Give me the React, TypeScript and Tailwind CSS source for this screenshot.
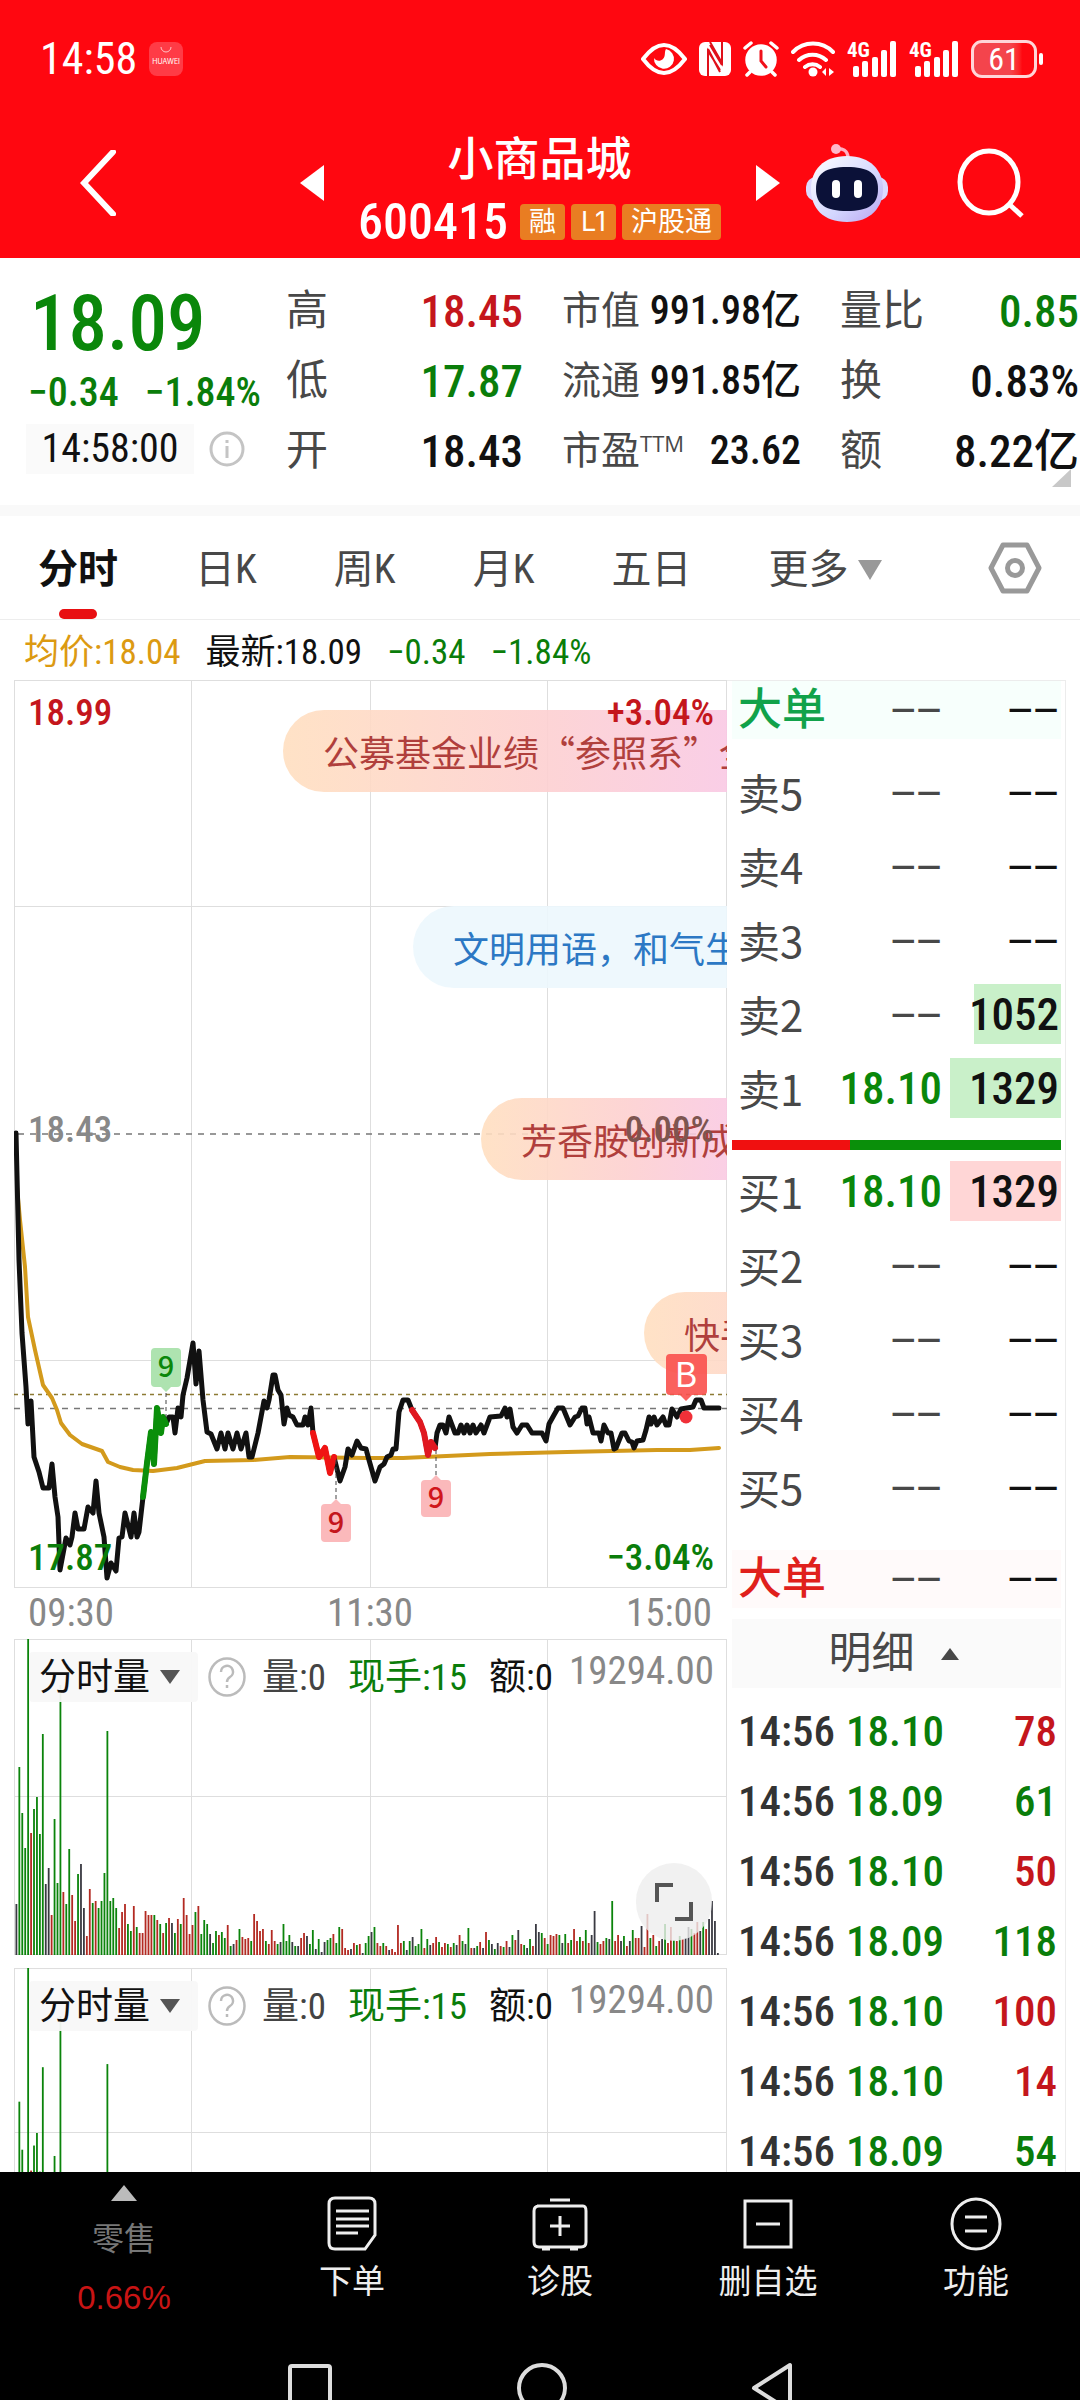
import React from 'react';

const UP = 'text-[#c4161c]';
const DOWN = 'text-[#0a7d0a]';

const tabs = ['分时', '日K', '周K', '月K', '五日'];

const asks = [
  { label: '卖5', price: '', volume: '', bar: 0 },
  { label: '卖4', price: '', volume: '', bar: 0 },
  { label: '卖3', price: '', volume: '', bar: 0 },
  { label: '卖2', price: '', volume: '1052', bar: 87 },
  { label: '卖1', price: '18.10', volume: '1329', bar: 111 }
];

const bids = [
  { label: '买1', price: '18.10', volume: '1329', bar: 111 },
  { label: '买2', price: '', volume: '', bar: 0 },
  { label: '买3', price: '', volume: '', bar: 0 },
  { label: '买4', price: '', volume: '', bar: 0 },
  { label: '买5', price: '', volume: '', bar: 0 }
];

const ticks = [
  { time: '14:56', price: '18.10', volume: '78', up: true },
  { time: '14:56', price: '18.09', volume: '61', up: false },
  { time: '14:56', price: '18.10', volume: '50', up: true },
  { time: '14:56', price: '18.09', volume: '118', up: false },
  { time: '14:56', price: '18.10', volume: '100', up: true },
  { time: '14:56', price: '18.10', volume: '14', up: true },
  { time: '14:56', price: '18.09', volume: '54', up: false }
];

const priceLine =
  '2,453 5,580 8,653 12,707 14,744 17,721 20,777 25,792 29,808 35,808 38,784 41,817 44,837 46,890 52,858 56,865 58,857 61,833 64,849 70,849 74,827 79,833 82,801 85,833 90,857 93,898 97,883 102,891 105,858 108,857 111,833 117,857 120,833 123,857 125,852 129,817 133,783 137,752 140,784 143,728 147,753 149,737 152,744 155,737 159,737 161,753 164,728 167,737 169,715 173,698 179,663 182,704 185,671 189,720 193,752 197,754 203,769 207,753 211,769 214,753 219,769 223,753 227,769 232,753 235,777 238,777 244,753 250,721 253,728 255,720 259,695 261,695 264,710 267,715 270,744 273,728 275,735 279,737 283,745 289,745 291,737 294,745 297,728 299,753 305,777 311,768 316,793 320,777 326,801 331,787 334,769 338,775 343,761 347,768 352,769 355,780 361,801 366,787 370,784 373,777 377,775 379,769 382,769 385,732 389,720 394,720 398,730 406,742 410,753 414,775 417,762 421,768 423,753 426,745 429,745 432,753 435,737 441,753 444,753 447,745 450,753 453,745 456,753 459,745 462,753 467,745 470,753 476,737 487,736 491,728 493,737 496,729 499,747 503,753 508,745 513,745 518,753 528,753 532,761 535,744 540,735 544,728 549,728 556,745 561,737 564,736 568,728 571,728 573,744 575,737 579,753 585,753 587,761 590,745 594,753 597,753 600,769 602,768 608,753 611,753 615,761 618,762 620,768 623,761 629,760 632,750 635,737 637,744 640,737 643,745 649,737 652,745 655,745 658,729 663,737 667,729 679,727 682,720 687,720 690,728 705,728';

const averageLine =
  '3,507 6,540 11,587 14,637 21,670 29,705 38,718 43,730 47,743 56,755 68,764 88,771 94,782 106,787 119,790 139,791 163,788 191,781 239,780 276,777 353,778 389,778 476,774 553,772 643,770 676,770 705,768';

// one entry per minute: height followed by g (down), r (up) or k (flat)
const volumes =
  '51k 188g 142g 107g 316g 122r 146g 158g 121g 221g 71k 87k 40r 136g 72g 270g 63r 51g 106g 60r 34r 81g 91k 47k 19r 66r 52g 54r 47g 54g 82g 224g 54g 57g 47g 27r 43r 51r 31g 24g 49r 28g 22r 22r 44r 40r 40r 40g 35r 31g 22r 32g 37r 32k 22g 36r 31g 57r 40r 21r 30r 43g 49r 21g 35g 31g 21k 12g 24g 20r 23g 17g 30r 9g 11k 15r 26g 18r 16r 17r 14g 41r 34r 24r 26r 14g 11r 25r 14r 11g 13k 31g 14g 20g 13k 9g 9k 17r 22r 19k 11g 25g 6k 16g 3k 13k 15g 17g 21r 12g 28g 26r 7r 5r 6k 12r 10g 11r 2k 12g 19g 23k 28g 12r 9r 12g 9r 5k 6r 3r 30r 12r 14g 5k 14g 18k 9g 11g 26g 7r 16g 10k 12r 18r 13g 8r 12r 11g 8r 12g 10k 20r 14g 11k 27g 7r 7k 9g 13r 7k 23r 15g 11k 6g 12k 9r 8g 14r 8k 20g 15r 25k 11r 10g 7k 16g 9r 31k 23k 22g 17r 11g 20r 19r 21r 20g 12k 21g 12r 15g 26r 14r 18g 14r 25g 12r 20k 44k 13g 11r 14r 17g 16k 54g 14r 20r 14k 19g 9r 14k 25g 17r 17r 29k 8r 41r 17g 20r 9g 14r 16k 31g 12r 28r 15g 14r 19g 16r 17k 28k 26g 22r 33r 24k 33g 26r 36k 54k 34k 2k'.split(
    ' '
  );

const barColor: Record<string, string> = { g: '#0b840b', r: '#b32a22', k: '#3a3a42' };

const Dashes = () => <span className="font-['Liberation_Sans'] text-[44px]">−−</span>;

const Triangle = ({ d, className }: { d: string; className: string }) => (
  <svg viewBox="0 0 24 36" preserveAspectRatio="none" className={className} aria-hidden="true">
    <path d={d} fill="currentColor" />
  </svg>
);

const Signal = () => (
  <svg viewBox="0 0 50 36" className="h-9 w-[50px]" fill="#fff" aria-hidden="true">
    <text x="0" y="16" fontSize="21" fontWeight="bold" fontFamily="Roboto Condensed, sans-serif">
      4G
    </text>
    <rect x="6" y="25" width="6" height="11" rx="2" />
    <rect x="15" y="20" width="6" height="16" rx="2" />
    <rect x="25" y="16" width="6" height="20" rx="2" />
    <rect x="34" y="9" width="6" height="27" rx="2" />
    <rect x="43" y="0" width="6" height="36" rx="2" />
  </svg>
);

const StatusBar = () => (
  <div className="flex h-[116px] items-center justify-between pt-[2px] pr-[37px] pl-10">
    <div className="flex items-center gap-3">
      <span className="text-[44px] leading-none">14:58</span>
      <span className="flex h-[34px] w-[34px] flex-col items-center rounded-lg bg-[#ff3b46] font-['Inter'] text-[7px] leading-none">
        <svg viewBox="0 0 12 8" className="mt-1 h-2 w-3" fill="none" stroke="#ffc5c8" aria-hidden="true">
          <path d="M1 1a5 5 0 0 0 10 0" />
        </svg>
        <span className="mt-1">HUAWEI</span>
      </span>
    </div>
    <div className="flex items-center gap-3">
      <svg viewBox="0 0 46 34" className="h-[34px] w-[46px]" aria-hidden="true">
        <path d="M2 17Q23-11 44 17Q23 45 2 17Z" fill="none" stroke="#fff" strokeWidth="4" strokeLinejoin="round" />
        <path d="M25 7a10 10 0 1 1-12 9c2 3 6 4 9 1c3-3 1-7 3-10Z" fill="#fff" />
      </svg>
      <svg viewBox="0 0 32 34" className="h-[34px] w-8" aria-hidden="true">
        <rect width="32" height="34" rx="6" fill="#fff" />
        <path d="M9 34V9l12 19M11 0l12 21V0M11 3l12 20M9 7l12 23" fill="none" stroke="#e0101a" strokeWidth="2" />
      </svg>
      <svg viewBox="0 0 36 36" className="h-9 w-9" fill="none" stroke="#fff" strokeWidth="3.500" strokeLinecap="round" aria-hidden="true">
        <circle cx="18" cy="19" r="14" fill="#fff" />
        <path d="M2 7l6-5M34 7l-6-5M7 31l-3 3M29 31l3 3" />
        <path d="M18 10v10l5 6" stroke="#f0101a" strokeWidth="3" />
      </svg>
      <svg viewBox="0 0 44 36" className="h-9 w-11" fill="none" stroke="#fff" strokeWidth="4" strokeLinecap="round" aria-hidden="true">
        <path d="M2 11a28 28 0 0 1 40 0M8 19a20 20 0 0 1 27 0M14 26a12 12 0 0 1 15 0" />
        <circle cx="22" cy="31" r="4.500" fill="#fff" stroke="none" />
        <path d="M35 27v8l-4-4ZM38 27v8l5-4Z" fill="#fff" stroke="none" />
      </svg>
      <Signal />
      <Signal />
      <span className="flex items-center gap-[2px]">
        <span className="flex h-[38px] w-[66px] items-center justify-center rounded-[11px] border-[3px] border-[#ffd5d8] bg-linear-to-r from-[#f4444c] from-60% to-[#ff0710] to-80% text-[32px] leading-none">
          61
        </span>
        <span className="h-3 w-1 rounded-sm bg-white" />
      </span>
    </div>
  </div>
);

const Robot = () => (
  <svg viewBox="0 0 82 78" className="h-[78px] w-[82px]" aria-hidden="true">
    <defs>
      <linearGradient id="shell" x1="0" y1="0" x2="1" y2="1">
        <stop offset="0" stopColor="#fff" />
        <stop offset="0.600" stopColor="#d3d6ff" />
        <stop offset="1" stopColor="#b9a4ee" />
      </linearGradient>
    </defs>
    <path d="M42 14C42 6 36 4 30 5" fill="none" stroke="#ffb0c4" strokeWidth="3.500" />
    <circle cx="30" cy="5" r="5" fill="#ffb8ca" />
    <rect x="0" y="33" width="82" height="24" rx="10" fill="#dcd9ff" />
    <path d="M41 12C65 12 77 27 77 45S65 78 41 78S5 64 5 45S17 12 41 12Z" fill="url(#shell)" />
    <path d="M41 23C62 23 72 29 72 45S62 67 41 67S10 61 10 45S20 23 41 23Z" fill="#0b1138" />
    <rect x="26" y="36" width="8" height="18" rx="4" fill="#fff" />
    <rect x="48" y="36" width="8" height="18" rx="4" fill="#fff" />
  </svg>
);

const Header = () => (
  <header className="bg-[#ff0710] text-white">
    <StatusBar />
    <div className="flex h-[142px] items-center pb-2">
      <div className="flex flex-1 pl-20">
        <button aria-label="返回">
          <svg viewBox="0 0 36 66" className="h-[66px] w-9" fill="none" stroke="#fff" strokeWidth="6" aria-hidden="true">
            <path d="M33 2L4 33L33 64" strokeLinecap="round" />
          </svg>
        </button>
      </div>
      <div className="flex w-[480px] items-center justify-between">
        <button aria-label="上一只">
          <Triangle d="M24 0v36L0 18Z" className="h-9 w-6" />
        </button>
        <div className="flex flex-col items-center pt-4">
          <h1 className="text-[46px] leading-[62px] font-medium">小商品城</h1>
          <div className="flex h-16 items-center gap-[6px] text-[27px]">
            <span className="mr-[6px] text-[50px] leading-none font-medium">600415</span>
            <span className="rounded-sm bg-[#e97d22] px-[9px] leading-9">融</span>
            <span className="rounded-sm bg-[#e97d22] px-[10px] font-['Inter'] leading-9">L1</span>
            <span className="rounded-sm bg-[#e97d22] px-[9px] leading-9">沪股通</span>
          </div>
        </div>
        <button aria-label="下一只">
          <Triangle d="M0 0v36L24 18Z" className="h-9 w-6" />
        </button>
      </div>
      <div className="flex flex-1 items-center justify-between pr-[55px] pl-[26px]">
        <button aria-label="智能助手">
          <Robot />
        </button>
        <button aria-label="搜索">
          <svg viewBox="0 0 68 70" className="h-[70px] w-[68px]" fill="none" stroke="#fff" strokeWidth="5" aria-hidden="true">
            <ellipse cx="32" cy="34" rx="29" ry="31" />
            <path d="M53 57l12 11" />
          </svg>
        </button>
      </div>
    </div>
  </header>
);

const Stat = ({ label, value, tone = 'text-[#111]', small = false }: { label: React.ReactNode; value: string; tone?: string; small?: boolean }) => (
  <div className="flex h-[70px] items-center justify-between whitespace-nowrap">
    <dt className={small ? 'text-[39px] text-[#484848]' : 'text-[42px] text-[#484848]'}>{label}</dt>
    <dd className={`font-medium ${tone} ${small ? 'text-[40px]' : 'text-[45px]'}`}>{value}</dd>
  </div>
);

const Quote = () => (
  <section className="relative grid grid-cols-[minmax(0,1fr)_237px_239px_239px] gap-x-[39px] pt-[18px] pr-px pb-[19px] leading-none">
    <div className="whitespace-nowrap">
      <div className="flex h-[92px] items-center pt-1 pl-[30px] text-[77px] font-medium text-[#0a870a]">18.09</div>
      <div className={`flex h-[50px] items-center gap-[26px] pl-7 text-[40px] font-medium ${DOWN}`}>
        <span>−0.34</span>
        <span>−1.84%</span>
      </div>
      <div className="mt-[6px] flex items-center gap-[15px] pl-[26px]">
        <span className="flex h-[50px] w-[168px] items-center justify-center bg-[#fafafa] text-[40px] text-[#111]">14:58:00</span>
        <button aria-label="说明">
          <svg viewBox="0 0 36 36" className="h-9 w-9" fill="none" stroke="#c4c4c4" strokeWidth="3" aria-hidden="true">
            <circle cx="18" cy="18" r="16" />
            <path d="M18 15v12M18 9v3" />
          </svg>
        </button>
      </div>
    </div>
    <dl>
      <Stat label="高" value="18.45" tone={UP} />
      <Stat label="低" value="17.87" tone={DOWN} />
      <Stat label="开" value="18.43" />
    </dl>
    <dl>
      <Stat label="市值" value="991.98亿" small />
      <Stat label="流通" value="991.85亿" small />
      <Stat
        label={
          <span className="flex">
            市盈<span className="font-['Open_Sans'] text-[22px]">TTM</span>
          </span>
        }
        value="23.62"
        small
      />
    </dl>
    <dl>
      <Stat label="量比" value="0.85" tone={DOWN} />
      <Stat label="换" value="0.83%" />
      <Stat label="额" value="8.22亿" />
    </dl>
    <Triangle d="M24 0v36H0Z" className="absolute right-[9px] bottom-[18px] h-[18px] w-[19px] text-[#c8c8c8]" />
  </section>
);

const Tabs = () => (
  <nav className="box-content flex h-[103px] items-center border-t-[11px] border-b border-[#ededed] border-t-[#f9f9f9] pl-[38px] text-[40px] text-[#484848]">
    <div className="flex h-full items-stretch gap-[77px]">
      {tabs.map((tab, index) => (
        <button key={tab} className={index === 0 ? 'relative pt-1 font-bold text-[#111]' : 'pt-1'}>
          {tab}
          {index === 0 && <span className="absolute bottom-0 left-1/2 h-[10px] w-[38px] -translate-x-1/2 rounded-full bg-[#e80f12]" />}
        </button>
      ))}
      <button className="flex items-center gap-[10px] pt-1">
        更多
        <Triangle d="M0 0h24L12 36Z" className="h-5 w-6 text-[#999]" />
      </button>
    </div>
    <button aria-label="设置" className="mr-[38px] ml-auto">
      <svg viewBox="0 0 54 52" className="h-[52px] w-[54px]" fill="none" stroke="#999" strokeWidth="5" strokeLinejoin="round" aria-hidden="true">
        <path d="M15 3h24L51 26L39 49H15L3 26Z" />
        <circle cx="27" cy="26" r="7.500" />
      </svg>
    </button>
  </nav>
);

const Grid = ({ height, rows }: { height: number; rows: number[] }) => (
  <g stroke="#dedede" strokeWidth="1" fill="none">
    <rect x="0.500" y="0.500" width="712" height={height - 1} />
    {[177, 356, 533].map((x) => (
      <path key={x} d={`M${x}.500 0V${height}`} />
    ))}
    {rows.map((y) => (
      <path key={y} d={`M0 ${y}.500H713`} />
    ))}
  </g>
);

const Bullet = ({ className, children }: { className: string; children: string }) => (
  <div className={`absolute flex h-[82px] items-center rounded-l-full pl-10 font-['Noto_Sans_CJK_SC'] text-[36px] font-normal whitespace-nowrap ${className}`}>
    {children}
  </div>
);

const PriceChart = () => (
  <div className="relative overflow-hidden text-[37px] leading-none font-medium">
    <svg viewBox="0 0 713 908" className="block h-auto w-full" role="img" aria-label="分时走势">
      <Grid height={908} rows={[226, 680]} />
      <path d="M4 454H713" stroke="#777" strokeWidth="1.500" strokeDasharray="6 6" />
      <path d="M0 714.500H713" stroke="#8c7a33" strokeWidth="1.500" strokeDasharray="4 4" />
      <path d="M0 728.500H713" stroke="#777" strokeWidth="1.500" strokeDasharray="6 6" />
      <g fill="none" strokeLinejoin="round" strokeLinecap="round">
        <polyline points={averageLine} stroke="#d39a1c" strokeWidth="4" />
        <polyline points={priceLine} stroke="#111" strokeWidth="5" />
        <polyline points="129,817 133,783 137,752 140,784 143,728 147,753 149,737 152,744" stroke="#0a8f0a" strokeWidth="6" />
        <polyline points="299,753 305,777 311,768 316,793 320,777" stroke="#f01414" strokeWidth="6" />
        <polyline points="398,730 406,742 410,753 414,775 417,762 421,768" stroke="#e01820" strokeWidth="6" />
      </g>
      <path d="M152 713v24M322 780v40M422 770v25" stroke="#444" strokeWidth="1" strokeDasharray="4 3" />
      <g fontSize="29" fontWeight="500" textAnchor="middle" fontFamily="Noto Sans CJK SC, sans-serif">
        <path d="M141 668h22a4 4 0 0 1 4 4v31a4 4 0 0 1-4 4h-6l-5 5l-5-5h-6a4 4 0 0 1-4-4v-31a4 4 0 0 1 4-4Z" fill="#aee3b0" />
        <text x="152" y="697" fill="#0a870a">
          9
        </text>
        <path d="M311 824h6l5-5l5 5h6a4 4 0 0 1 4 4v30a4 4 0 0 1-4 4h-22a4 4 0 0 1-4-4v-30a4 4 0 0 1 4-4Z" fill="#fbb9bb" />
        <text x="322" y="853" fill="#c4161c">
          9
        </text>
        <path d="M411 800h6l5-5l5 5h6a4 4 0 0 1 4 4v29a4 4 0 0 1-4 4h-22a4 4 0 0 1-4-4v-29a4 4 0 0 1 4-4Z" fill="#fbb9bb" />
        <text x="422" y="828" fill="#d0161c">
          9
        </text>
      </g>
    </svg>

    {/* bullet comments drifting in from the right */}
    <Bullet className="top-[30px] left-[269px] bg-linear-to-r from-[#ffdfc0]/90 via-[#fdd0d0]/90 to-[#f8c6ea]/90 text-[#b03f3c]">公募基金业绩“参照系”全面</Bullet>
    <Bullet className="top-[226px] left-[399px] bg-[#ecf7fd]/90 text-[#2c78c4]">文明用语，和气生财</Bullet>
    <Bullet className="top-[418px] left-[467px] bg-linear-to-r from-[#ffdfc0]/90 via-[#fdd0d0]/90 to-[#f8c6ea]/90 text-[#b03f3c]">芳香胺创新成果</Bullet>
    <Bullet className="top-[612px] left-[630px] bg-linear-to-r from-[#ffdfc0]/90 to-[#fdd0d0]/90 text-[#b03f3c]">快手概念</Bullet>

    <svg viewBox="0 0 713 908" className="absolute inset-0 h-full w-full" aria-hidden="true">
      <path d="M656 674h33a4 4 0 0 1 4 4v33a4 4 0 0 1-4 4h-11l-6 6l-6-6h-10a4 4 0 0 1-4-4v-33a4 4 0 0 1 4-4Z" fill="#f9504c" fillOpacity="0.900" />
      <text x="672" y="707" fontSize="34" fontWeight="400" textAnchor="middle" fill="#fff" fontFamily="Noto Sans CJK SC, sans-serif">
        B
      </text>
      <circle cx="672" cy="737" r="6.500" fill="#f03038" />
    </svg>

    <span className={`absolute top-[14px] left-[14px] ${UP}`}>18.99</span>
    <span className={`absolute top-[14px] right-[13px] ${UP}`}>+3.04%</span>
    <span className="absolute top-[431px] left-[14px] text-[#888]">18.43</span>
    <span className="absolute top-[431px] right-[13px] text-[#7d5550]">0.00%</span>
    <span className={`absolute bottom-[12px] left-[14px] ${DOWN}`}>17.87</span>
    <span className={`absolute right-[13px] bottom-[12px] ${DOWN}`}>−3.04%</span>
  </div>
);

const VolumePanel = ({ className, chart, middle }: { className: string; chart: string; middle: number }) => (
  <div className={`relative overflow-hidden ${className}`}>
    <svg viewBox="0 0 713 316" preserveAspectRatio="none" className={`block w-full ${chart}`} role="img" aria-label="分时量">
      <Grid height={316} rows={[middle]} />
      {volumes.map((entry, index) => {
        const height = parseInt(entry, 10);
        return <rect key={index} x={1.5 + index * 2.935} y={316 - height} width="1.800" height={height} fill={barColor[entry.slice(-1)]} />;
      })}
    </svg>
    <div className="absolute top-[13px] right-[13px] left-[15px] flex h-[50px] items-center text-[37px] leading-none whitespace-nowrap">
      <button className="flex h-full w-[169px] items-center gap-[10px] rounded bg-[#f8f8f8]/95 pl-[10px] text-[#111]">
        分时量
        <Triangle d="M0 0h24L12 36Z" className="h-[14px] w-5 text-[#555]" />
      </button>
      <button aria-label="帮助" className="ml-[10px]">
        <svg viewBox="0 0 38 40" className="h-10 w-[38px]" fill="none" stroke="#bbb" strokeWidth="2.500" aria-hidden="true">
          <ellipse cx="19" cy="20" rx="17.500" ry="18.500" />
          <path d="M13 15a6 6 0 1 1 9 5q-3 2-3 5M19 28v3" />
        </svg>
      </button>
      <span className="ml-4 text-[#444]">量:0</span>
      <span className={`ml-[22px] ${DOWN}`}>现手:15</span>
      <span className="ml-[22px] text-[#111]">额:0</span>
      <span className="ml-auto pb-3 text-[39px] text-[#888]">19294.00</span>
    </div>
  </div>
);

const BookTable = ({ rows, highlight }: { rows: typeof asks; highlight: string }) => (
  <table className="w-full text-right text-[45px] leading-none font-medium">
    <tbody>
      {rows.map((row) => (
        <tr key={row.label} className="h-[74px]">
          <th scope="row" className="w-[90px] pl-[6px] text-left font-['Noto_Sans_CJK_SC'] text-[42px] leading-none font-normal text-[#484848]">
            {row.label}
          </th>
          <td className={row.price ? 'text-[#0a870a]' : 'text-[#484848]'}>{row.price || <Dashes />}</td>
          <td className={`w-[119px] text-[#111] ${row.volume ? '' : 'pr-[2px]'}`}>
            {row.volume ? (
              <span className={`ml-auto flex h-[60px] items-center justify-end pr-[2px] ${highlight}`} style={{ width: row.bar }}>
                {row.volume}
              </span>
            ) : (
              <Dashes />
            )}
          </td>
        </tr>
      ))}
    </tbody>
  </table>
);

const BigOrders = ({ className }: { className: string }) => (
  <div className={`flex h-[58px] items-center pl-[6px] text-[44px] leading-none ${className}`}>
    <span className="mr-auto font-medium">大单</span>
    <span className="text-[#484848]">
      <Dashes />
    </span>
    <span className="w-[119px] pr-[2px] text-right text-[#111]">
      <Dashes />
    </span>
  </div>
);

const OrderBook = () => (
  <aside className="mr-[14px] flex flex-col overflow-hidden border-t border-r border-[#ececec] pr-1 pl-[5px]">
    <BigOrders className="bg-[#f7fffc] text-[#11a24a]" />
    <div className="pt-4">
      <BookTable rows={asks} highlight="bg-[#c9f0c9]" />
    </div>
    <div className="mt-[15px] mb-1 flex h-[10px] shrink-0">
      <span className="w-[36%] bg-[#f01010]" />
      <span className="flex-1 bg-[#0a8f0a]" />
    </div>
    <BookTable rows={bids} highlight="bg-[#ffd6d6]" />
    <BigOrders className="mt-[26px] bg-[#fffafa] text-[#e0201c]" />
    <button className="mt-[11px] flex h-[69px] shrink-0 items-center justify-center gap-[26px] bg-[#fafafa] pr-[26px] pl-5 text-[43px] text-[#484848]">
      明细
      <Triangle d="M12 0L24 36H0Z" className="h-3 w-[18px]" />
    </button>
    <div className="mt-2 h-0 grow overflow-hidden">
      <table className="w-full text-right text-[43px] leading-none font-medium">
        <tbody>
          {ticks.map((tick, index) => (
            <tr key={index} className="h-[70px]">
              <td className="pl-[6px] text-left text-[#333]">{tick.time}</td>
              <td className={DOWN}>{tick.price}</td>
              <td className={`w-[117px] pr-1 ${tick.up ? UP : DOWN}`}>{tick.volume}</td>
            </tr>
          ))}
        </tbody>
      </table>
    </div>
  </aside>
);

const actions = [
  {
    name: '下单',
    icon: <path d="M7 2h34q6 0 6 6v31L37 53H7q-6 0-6-6V8q0-6 6-6ZM8 15h33M8 23h33M8 30h33M8 37h22" />
  },
  {
    name: '诊股',
    icon: <path d="M14 4h20M1 10h46q3 0 3 5v31q0 5-5 5H3q-5 0-5-5V15q0-5 5-5M24 20v20M14 30h20M6 53h8M34 53h8" />
  },
  { name: '删自选', icon: <path d="M1 5h46v46H1ZM12 28h24" /> },
  { name: '功能', icon: <path d="M24 3a24 25 0 1 1 0 50a24 25 0 1 1 0-50ZM13 21h22M13 35h22" /> }
];

const BottomBar = () => (
  <footer className="bg-black text-[33px] leading-none text-[#eee]">
    <div className="grid h-[190px] grid-cols-[248px_repeat(4,1fr)]">
      <button className="flex flex-col items-center pt-[13px] text-[#777]">
        <Triangle d="M12 0L24 36H0Z" className="h-4 w-[26px] text-[#bbb]" />
        <span className="mt-[22px] text-[32px]">零售</span>
        <span className="mt-[26px] font-['Liberation_Sans'] text-[33px] text-[#c81414]">0.66%</span>
      </button>
      {actions.map((action) => (
        <button key={action.name} className="flex flex-col items-center pt-6">
          <svg viewBox="-4 0 56 56" className="h-14 w-14" fill="none" stroke="#eee" strokeWidth="3" aria-hidden="true">
            {action.icon}
          </svg>
          <span className="mt-[13px]">{action.name}</span>
        </button>
      ))}
    </div>
    <div className="flex h-[38px] justify-center gap-[184px] overflow-hidden">
      <button aria-label="最近任务">
        <svg viewBox="0 0 46 48" className="h-12 w-[46px]" fill="none" stroke="#ddd" strokeWidth="4" aria-hidden="true">
          <rect x="3" y="4" width="40" height="42" rx="2" />
        </svg>
      </button>
      <button aria-label="主页">
        <svg viewBox="0 0 50 52" className="h-[52px] w-[50px]" fill="none" stroke="#ddd" strokeWidth="4" aria-hidden="true">
          <circle cx="25" cy="26" r="23" />
        </svg>
      </button>
      <button aria-label="返回桌面">
        <svg viewBox="0 0 42 52" className="h-[52px] w-[42px]" fill="none" stroke="#ddd" strokeWidth="4" strokeLinejoin="round" aria-hidden="true">
          <path d="M39 3v46L3 26Z" />
        </svg>
      </button>
    </div>
  </footer>
);

const App = () => (
  <div className="min-h-screen overflow-hidden bg-white font-['Roboto_Condensed','Noto_Sans_CJK_SC',sans-serif] text-[#111]">
    <Header />
    <Quote />
    <Tabs />
    <div className="flex h-[60px] items-center gap-[25px] pt-1 pl-6 text-[35px] leading-none whitespace-nowrap">
      <span className="text-[#dc9a12]">均价:18.04</span>
      <span>最新:18.09</span>
      <span className={DOWN}>−0.34</span>
      <span className={DOWN}>−1.84%</span>
    </div>
    <main className="grid grid-cols-[1fr_353px]">
      <div className="pl-[14px]">
        <PriceChart />
        <div className="flex h-[51px] items-center justify-between pr-[15px] pl-[14px] text-[39px] leading-none text-[#888]">
          <span>09:30</span>
          <span>11:30</span>
          <span>15:00</span>
        </div>
        <div className="relative">
          <VolumePanel className="h-[316px]" chart="h-[316px]" middle={157} />
          <button aria-label="全屏" className="absolute right-[15px] bottom-[14px] flex h-[78px] w-[76px] items-center justify-center rounded-full bg-[#eee]/80">
            <svg viewBox="0 0 40 40" className="h-10 w-10" fill="none" stroke="#555" strokeWidth="4" aria-hidden="true">
              <path d="M3 20V3h16M37 20v17H21" />
            </svg>
          </button>
        </div>
        <VolumePanel className="mt-[13px] h-[204px]" chart="h-[330px]" middle={157} />
      </div>
      <OrderBook />
    </main>
    <BottomBar />
  </div>
);

export default App;
